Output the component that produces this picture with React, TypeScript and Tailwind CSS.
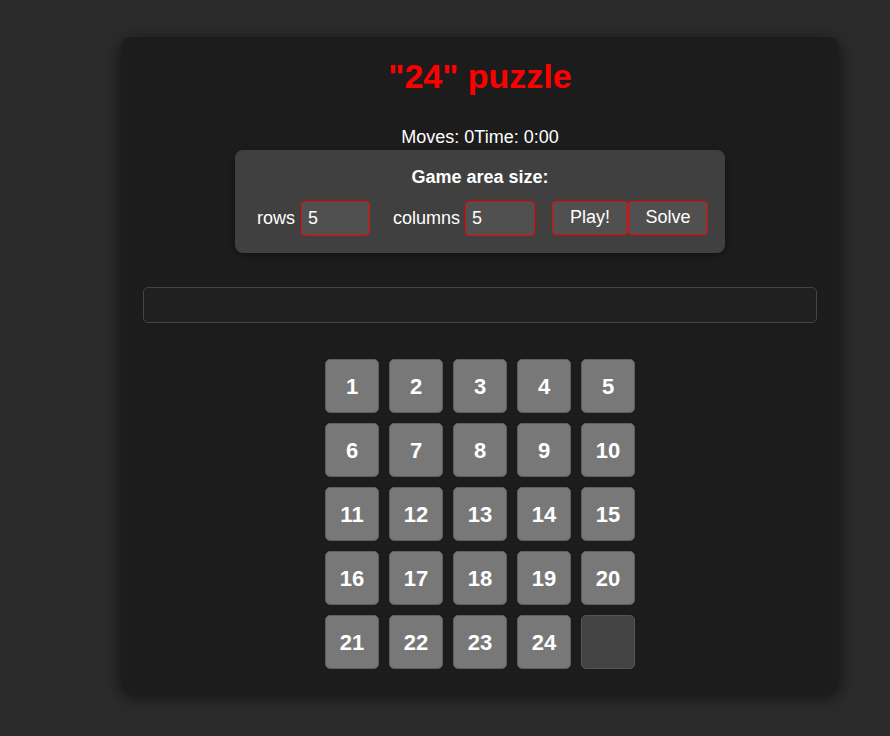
import React from "react";

const tiles: (number | null)[] = [
  1, 2, 3, 4, 5, 6, 7, 8, 9, 10, 11, 12, 13, 14, 15, 16, 17, 18, 19, 20, 21, 22, 23, 24, null,
];

export default function App() {
  return (
    <div className="min-h-[736px] bg-[#2b2b2b] pt-[37px] pl-[121px] font-['Liberation_Sans',Arial,sans-serif] text-white">
      <div className="w-[718px] rounded-[10px] bg-[#1c1c1c] px-[22px] pt-[20px] pb-[24px] shadow-[0_4px_16px_rgba(0,0,0,0.6)]">
        <h1 className="text-center text-[34px] font-bold leading-[39px] text-[#ff0000]">"24" puzzle</h1>
        <div className="mt-[31px] text-center text-[18px] leading-[21px]">
          <span>Moves: 0</span>
          <span>Time: 0:00</span>
        </div>
        <div className="mx-auto mt-[2px] w-[490px] rounded-[8px] bg-[#404040] pt-[17px] pb-[17px] shadow-[0_2px_6px_rgba(0,0,0,0.35)]">
          <div className="text-center text-[18px] font-bold leading-[21px]">Game area size:</div>
          <div className="mt-[13px] flex items-center justify-center pl-[5px]">
            <label className="flex items-center gap-[6px] text-[18px]">
              rows
              <input
                defaultValue="5"
                className="h-[35px] w-[69px] rounded-[4px] border border-[#ff0000] bg-[#505050] px-[6px] text-[18px] text-white outline-none"
              />
            </label>
            <label className="ml-[23px] flex items-center gap-[5px] text-[18px]">
              columns
              <input
                defaultValue="5"
                className="h-[35px] w-[70px] rounded-[4px] border border-[#ff0000] bg-[#505050] px-[6px] text-[18px] text-white outline-none"
              />
            </label>
            <button className="ml-[17px] h-[34px] w-[76px] -translate-y-[1px] rounded-[4px] border border-[#ff0000] bg-[#505050] text-[18px] text-white">
              Play!
            </button>
            <button className="h-[34px] w-[80px] -translate-y-[1px] rounded-[4px] border border-[#ff0000] bg-[#505050] text-[18px] text-white">
              Solve
            </button>
          </div>
        </div>
        <div className="mt-[34px] h-[36px] rounded-[5px] border border-[#444] bg-[#202020]" />
        <div className="mx-auto mt-[36px] grid w-[310px] grid-cols-5 gap-[10px]">
          {tiles.map((t, i) =>
            t === null ? (
              <div key={i} className="h-[54px] w-[54px] rounded-[5px] border border-[#555] bg-[#444]" />
            ) : (
              <div
                key={i}
                className="flex h-[54px] w-[54px] items-center justify-center rounded-[5px] border border-[#5e5e5e] bg-[#787878] text-[22px] font-bold text-white"
              >
                {t}
              </div>
            )
          )}
        </div>
      </div>
    </div>
  );
}
